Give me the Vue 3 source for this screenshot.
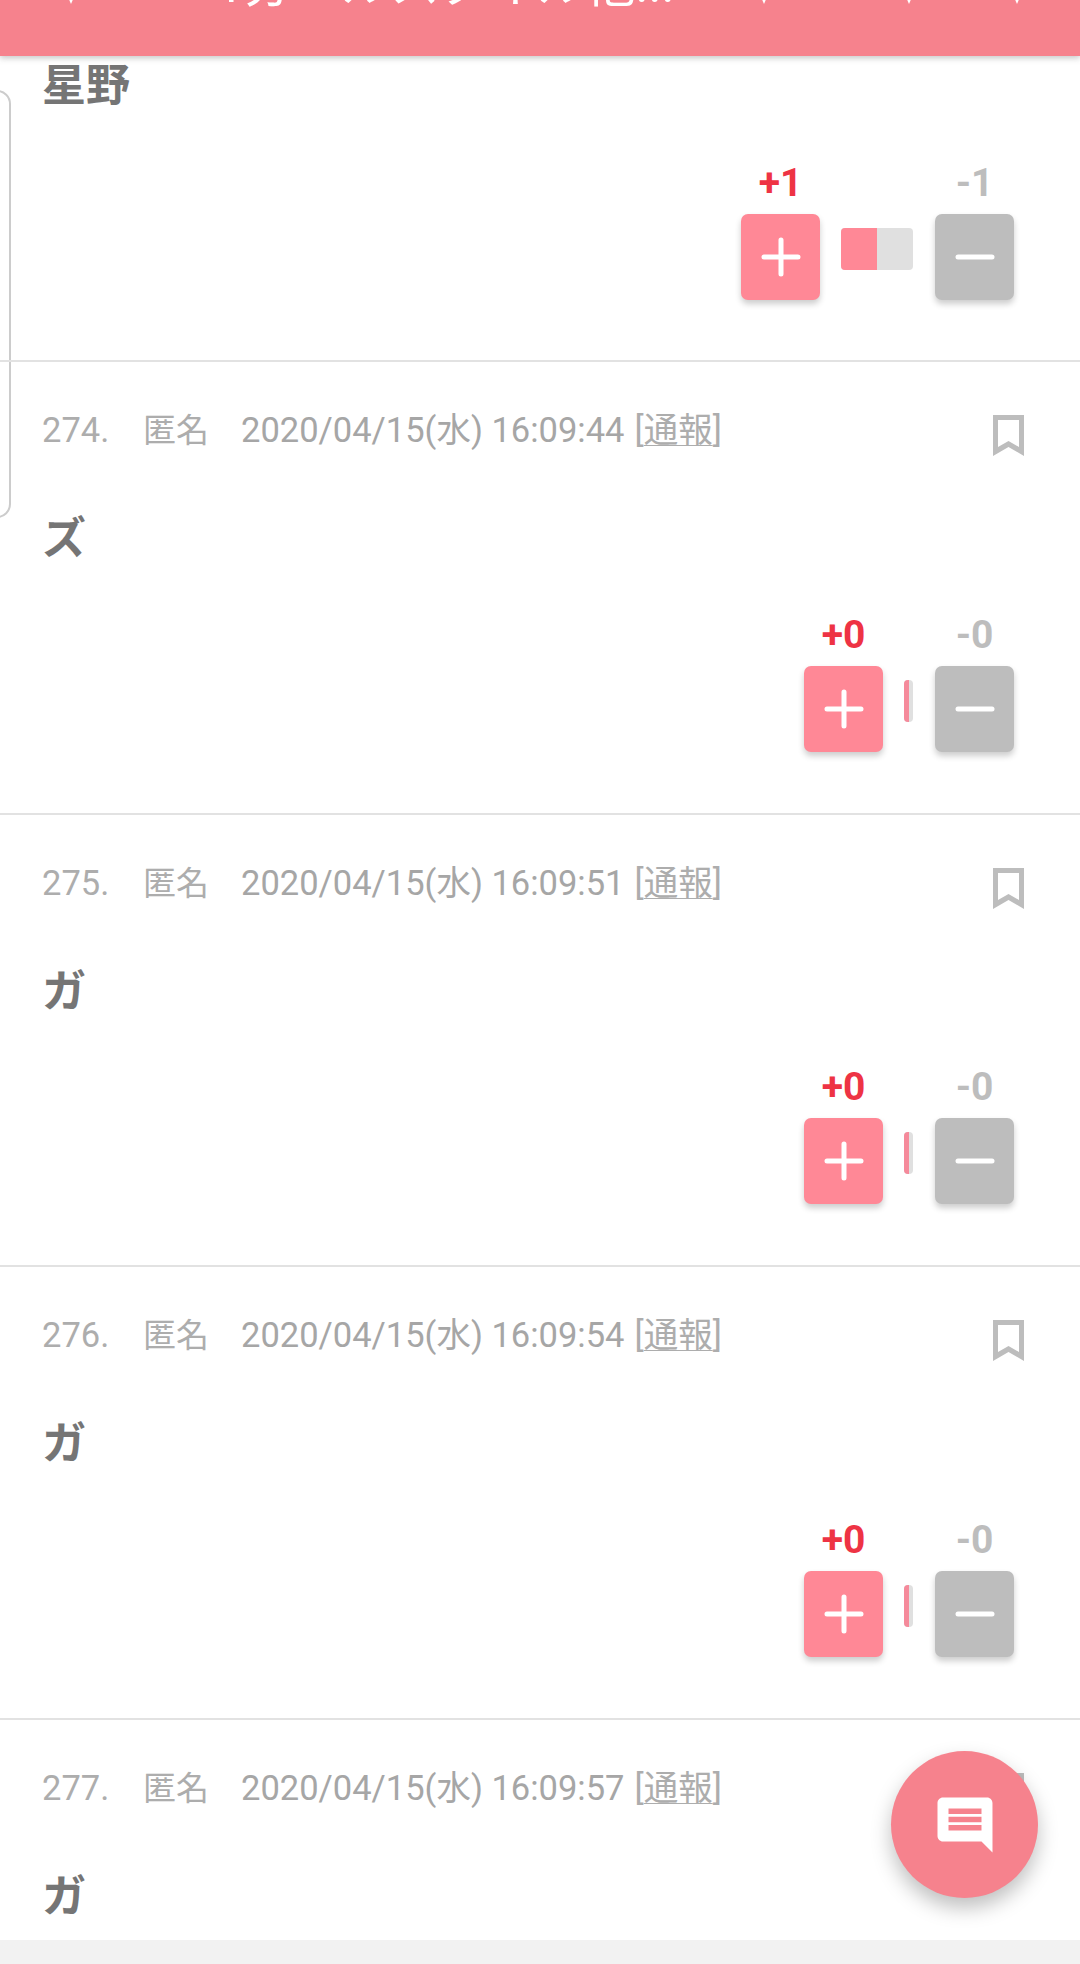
<template>
  <div class="page">
    <header class="topbar">
      <div class="topbar-text">
        <span class="tri"></span>
        <span class="title">1分・ルスタイル他...</span>
        <span class="tri t2"></span>
        <span class="tri t3"></span>
        <span class="tri t4"></span>
      </div>
    </header>

    <div class="side-tab"></div>

    <section class="comment first">
      <p class="body">星野</p>
      <div class="votes">
        <div class="vote">
          <span class="count plus">+1</span>
          <button class="btn btn-plus">
            <svg viewBox="0 0 40 40" width="40" height="40"><path d="M3 20H37M20 3V37" /></svg>
          </button>
        </div>
        <div class="ratio wide"><i class="fill"></i></div>
        <div class="vote">
          <span class="count minus">-1</span>
          <button class="btn btn-minus">
            <svg viewBox="0 0 40 40" width="40" height="40"><path d="M3 20H37" /></svg>
          </button>
        </div>
      </div>
    </section>

    <section v-for="c in comments" :key="c.no" class="comment" :class="{ last: !c.votes }">
      <div class="meta">
        <span class="no">{{ c.no }}.</span>
        <span class="name">匿名</span>
        <span class="date">{{ c.date }}</span>
        <span class="report">[<u>通報</u>]</span>
        <svg class="bookmark" viewBox="0 0 31 41" width="31" height="41">
          <path fill-rule="evenodd" d="M0 0H31V41L15.5 32L0 41ZM5 5V32L15.5 26L26 32V5Z" />
        </svg>
      </div>
      <p class="body">{{ c.text }}</p>
      <div v-if="c.votes" class="votes">
        <div class="vote">
          <span class="count plus">+0</span>
          <button class="btn btn-plus">
            <svg viewBox="0 0 40 40" width="40" height="40"><path d="M3 20H37M20 3V37" /></svg>
          </button>
        </div>
        <div class="ratio"><i class="fill"></i></div>
        <div class="vote">
          <span class="count minus">-0</span>
          <button class="btn btn-minus">
            <svg viewBox="0 0 40 40" width="40" height="40"><path d="M3 20H37" /></svg>
          </button>
        </div>
      </div>
    </section>

    <div class="page-foot"></div>

    <button class="fab">
      <svg viewBox="0 0 24 24" width="66" height="66">
        <path d="M21.99 4c0-1.1-.89-2-1.99-2H4c-1.1 0-2 .9-2 2v12c0 1.1.9 2 2 2h14l4 4-.01-18zM18 14H6v-2h12v2zm0-3H6V9h12v2zm0-3H6V6h12v2z" />
      </svg>
    </button>
  </div>
</template>

<script setup>
const comments = [
  { no: 274, date: '2020/04/15(水) 16:09:44', text: 'ズ', votes: true },
  { no: 275, date: '2020/04/15(水) 16:09:51', text: 'ガ', votes: true },
  { no: 276, date: '2020/04/15(水) 16:09:54', text: 'ガ', votes: true },
  { no: 277, date: '2020/04/15(水) 16:09:57', text: 'ガ', votes: false }
]
</script>

<style>
html, body {
  margin: 0;
  background: #fff;
}
</style>

<style scoped>
.page {
  position: relative;
  width: 1080px;
  height: 1964px;
  overflow: hidden;
  background: #fff;
  font-family: Roboto, "Noto Sans CJK JP", sans-serif;
  display: flex;
  flex-direction: column;
}

.topbar {
  height: 56px;
  flex: none;
  background: #f6828d;
  box-shadow: 0 2px 6px rgba(90, 90, 90, 0.35);
  position: relative;
  z-index: 2;
  overflow: hidden;
}

.topbar-text {
  position: relative;
  height: 12px;
  overflow: hidden;
  color: #fff;
}

.title {
  position: absolute;
  left: 216px;
  bottom: 2px;
  font-size: 49px;
  line-height: 48px;
  white-space: nowrap;
}

.tri {
  position: absolute;
  left: 65px;
  top: -10px;
  border-left: 6px solid transparent;
  border-right: 6px solid transparent;
  border-top: 14px solid #fff;
}
.t2 { left: 758px; }
.t3 { left: 903px; }
.t4 { left: 1011px; }

.side-tab {
  position: absolute;
  left: -20px;
  top: 90px;
  width: 31px;
  height: 428px;
  box-sizing: border-box;
  border: 2px solid #ccc;
  border-radius: 14px;
}

.comment {
  height: 452.7px;
  flex: none;
  box-sizing: border-box;
  padding: 0 42px;
  position: relative;
  border-bottom: 2px solid #e2e2e2;
}

.comment.first {
  height: 306px;
  padding-top: 0;
}

.comment.last {
  height: 220px;
  border-bottom: 0;
}

.meta {
  height: 40px;
  margin-top: 40px;
  display: flex;
  align-items: baseline;
  font-size: 34.5px;
  color: #adadad;
  white-space: nowrap;
}

.no { width: 101px; }
.name { width: 98px; font-size: 33px; }
.date { margin-right: 10px; color: #a6a6a6; }

.report u {
  text-underline-offset: 3px;
  text-decoration-thickness: 1px;
}

.bookmark {
  position: absolute;
  right: 56px;
  top: 53px;
  fill: #bdbdbd;
}

.body {
  margin: 0;
  font-size: 44px;
  font-weight: 700;
  line-height: 60px;
  color: #757575;
}

.meta + .body {
  margin-top: 67px;
}

.votes {
  position: absolute;
  right: 66px;
  bottom: 61px;
  display: flex;
  align-items: flex-end;
}

.first .votes {
  bottom: 60px;
}

.vote {
  width: 79px;
  display: flex;
  flex-direction: column;
  align-items: center;
}

.count {
  font-size: 39px;
  line-height: 36px;
  font-weight: 700;
  margin-bottom: 13px;
  font-family: Roboto, "Liberation Sans", sans-serif;
}
.plus { color: #ee3344; }
.minus { color: #bdbdbd; }

.btn {
  width: 79px;
  height: 86px;
  padding: 0;
  border: 0;
  border-radius: 7px;
  box-shadow: 0 4px 6px rgba(0, 0, 0, 0.2);
  display: flex;
  align-items: center;
  justify-content: center;
}
.btn svg {
  fill: none;
  stroke: #fff;
  stroke-width: 5;
  stroke-linecap: round;
}
.btn-plus { background: #ff8896; }
.btn-minus { background: #bdbdbd; }

.ratio {
  width: 9px;
  height: 42px;
  margin: 0 22px 30px 21px;
  border-radius: 4px;
  background: #e0e0e0;
  overflow: hidden;
}
.ratio.wide {
  width: 72px;
}
.ratio .fill {
  display: block;
  width: 60%;
  height: 100%;
  background: #f58a9b;
}
.ratio.wide .fill {
  width: 50%;
  background: #ff8896;
}

.page-foot {
  flex: 1;
  background: #f2f2f2;
}

.fab {
  position: absolute;
  left: 891px;
  top: 1751px;
  width: 147px;
  height: 147px;
  padding: 0;
  border: 0;
  border-radius: 50%;
  background: #f6828d;
  box-shadow: 0 10px 20px rgba(0, 0, 0, 0.25);
  display: flex;
  align-items: center;
  justify-content: center;
}
.fab svg {
  fill: #fff;
}
</style>
